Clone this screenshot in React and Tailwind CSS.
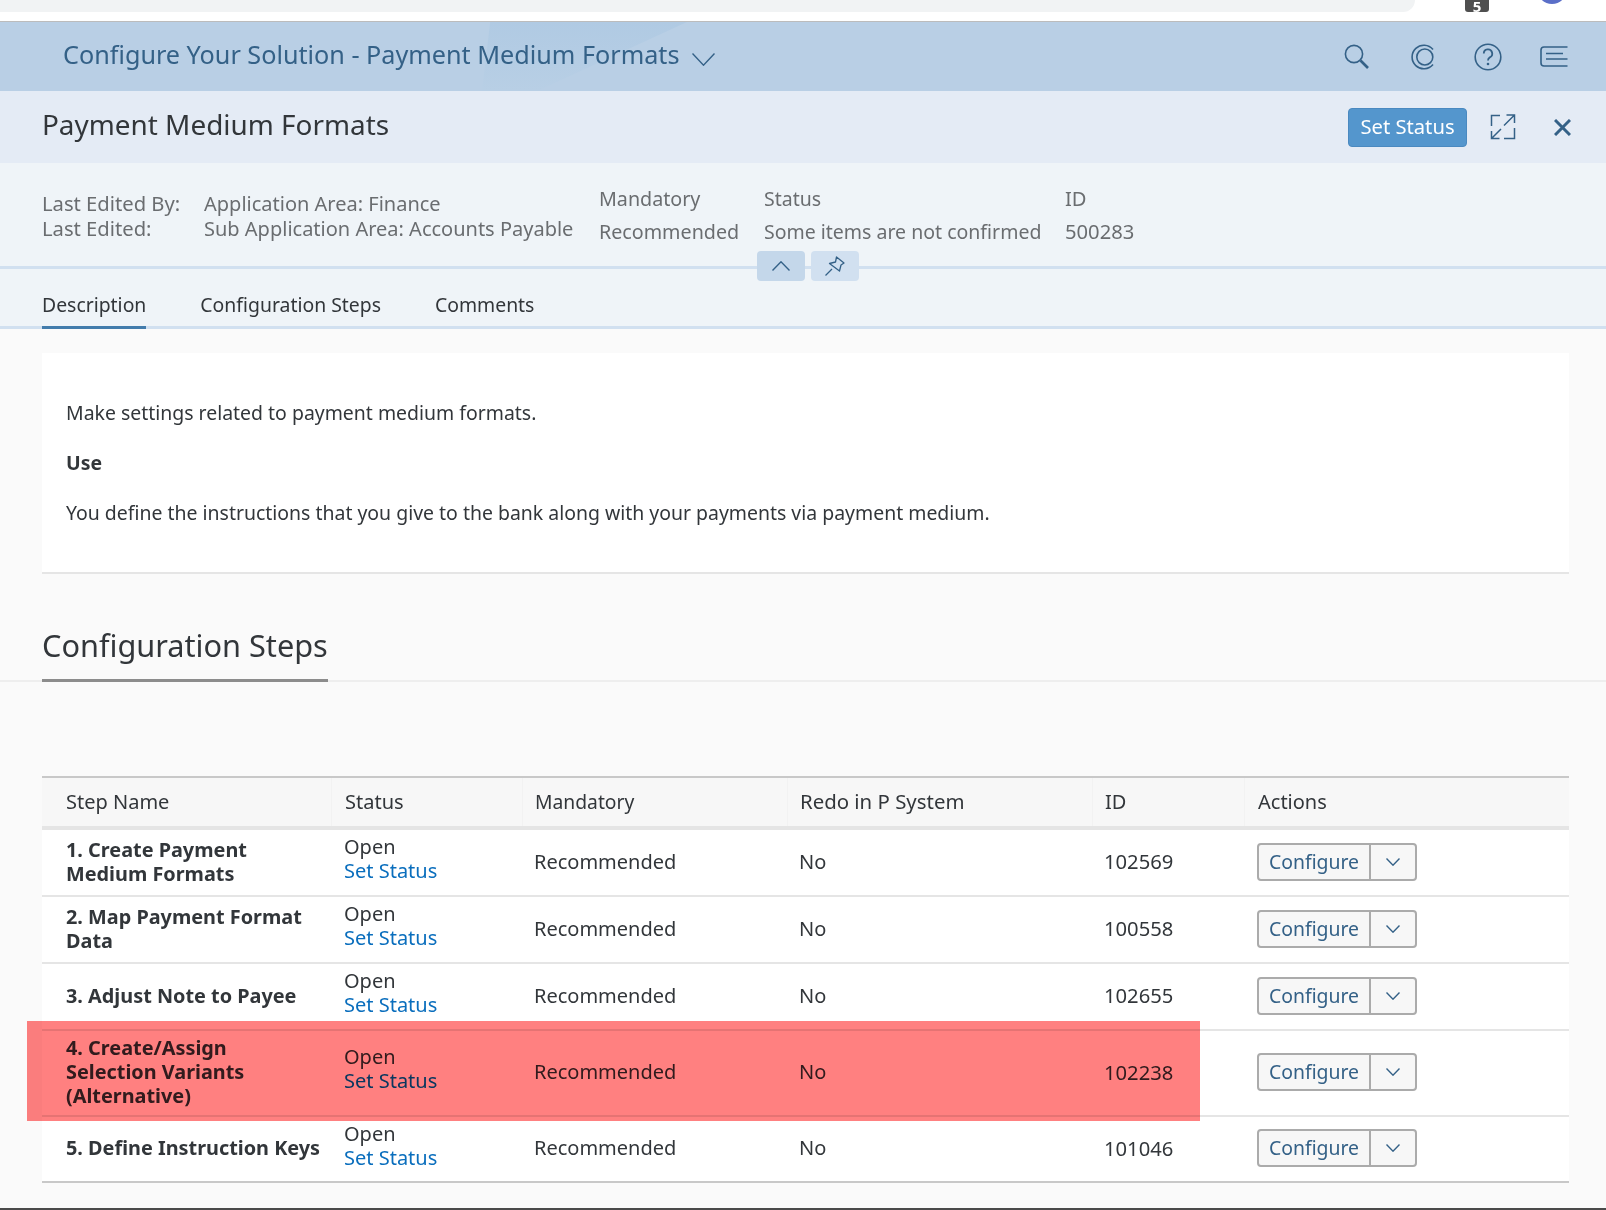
import React from 'react';

const font = { fontFamily: '"Noto Sans", sans-serif' };

function Search() {
  return (
    <svg width="26" height="26" viewBox="0 0 26 26" fill="none" stroke="#346187" strokeWidth="1.6">
      <circle cx="10" cy="10" r="8.6" />
      <path d="M16.5 16.5 L24 24" strokeWidth="2.6" />
    </svg>
  );
}
function Rings() {
  return (
    <svg width="24" height="26" viewBox="0 0 24 26" fill="none" stroke="#346187" strokeWidth="1.6">
      <path d="M22 5.5 A11.8 11.8 0 1 0 22 20.5" />
      <circle cx="13.8" cy="13" r="8" />
    </svg>
  );
}
function Help() {
  return (
    <svg width="28" height="28" viewBox="0 0 28 28" fill="none" stroke="#346187" strokeWidth="1.6">
      <circle cx="14" cy="14" r="12.8" />
      <path d="M9.8 10.6 A4.2 4.2 0 1 1 15.8 14.4 C14.4 15.2 14 16 14 17.6" strokeWidth="1.8" />
      <circle cx="14" cy="21" r="1.3" fill="#346187" stroke="none" />
    </svg>
  );
}
function Notes() {
  return (
    <svg width="28" height="21" viewBox="0 0 28 21" fill="none" stroke="#346187" strokeWidth="1.6">
      <path d="M27.5 1 H4 Q1 1 1 4 V17 Q1 20 4 20 H27.5" />
      <path d="M6 7.5 H23 M6 13 H27.5" />
    </svg>
  );
}
function Expand() {
  return (
    <svg width="26" height="26" viewBox="0 0 26 26" fill="none" stroke="#346187" strokeWidth="1.5">
      <path d="M10 1.5 H1.5 V12 M24.5 14 V24.5 H14" />
      <path d="M14 11.5 L24.5 1 M16.5 1 H24.5 V9" />
      <path d="M1.5 24.5 L11 15 M1.5 17 V24.5 H9.5" />
    </svg>
  );
}
function Close() {
  return (
    <svg width="17" height="17" viewBox="0 0 17 17" fill="none" stroke="#346187" strokeWidth="3">
      <path d="M1 1 L16 16 M16 1 L1 16" />
    </svg>
  );
}
function Chevron({ size = 14, up = false, color = '#346187' }) {
  const h = Math.round(size * 0.55);
  return (
    <svg width={size} height={h} viewBox={`0 0 ${size} ${h}`} fill="none" stroke={color} strokeWidth="1.4">
      <path d={up ? `M0.5 ${h - 0.5} L${size / 2} 0.8 L${size - 0.5} ${h - 0.5}` : `M0.5 0.5 L${size / 2} ${h - 0.8} L${size - 0.5} 0.5`} />
    </svg>
  );
}
function Pin() {
  return (
    <svg width="20" height="20" viewBox="0 0 20 20" fill="none" stroke="#346187" strokeWidth="1.3">
      <path d="M0.5 19.5 L7 13" />
      <path d="M11.5 1 L19 7 L16 9 L14.5 15 L4.5 7.5 L10.5 6 Z" strokeLinejoin="round" />
    </svg>
  );
}

function ConfigureButton() {
  return (
    <div className="flex h-[38px] w-[160px] rounded-[4px] border-2 border-[#ababab] bg-[#f7f7f7]">
      <div className="flex w-[112px] items-center justify-center border-r-2 border-[#ababab] text-[19.4px] text-[#346187]">Configure</div>
      <div className="flex flex-1 items-center justify-center"><Chevron size={14} /></div>
    </div>
  );
}

const cols = 'grid grid-cols-[289px_191px_265px_305px_152px_325px]';

function Row({ name, id, h, last }) {
  const rule = last ? 'border-[#c8c8c8]' : 'border-[#e5e5e5]';
  const statusPad = last ? 'pb-[6px]' : 'pb-[8px]';
  return (
    <div className={`${cols} ${h} border-b-2 ${rule} bg-white text-[20px] leading-[24px] text-[#32363a]`}>
      <div className="flex items-center pb-[2px] pl-6 pr-1 text-[19.85px] font-bold">
        <div>{name.map((line) => <div key={line}>{line}</div>)}</div>
      </div>
      <div className={`flex flex-col justify-center ${statusPad} pl-[13px]`}>
        <div>Open</div>
        <div className="text-[#0a6ebd]">Set Status</div>
      </div>
      <div className="flex items-center pb-[2px] pl-3">Recommended</div>
      <div className="flex items-center pb-[2px] pl-3">No</div>
      <div className="flex items-center pb-[3px] pl-3 text-[20.2px]">{id}</div>
      <div className="flex items-center pb-[2px] pl-[13px]"><ConfigureButton /></div>
    </div>
  );
}

const steps = [
  { name: ['1. Create Payment', 'Medium Formats'], id: '102569', h: 'h-[67px]' },
  { name: ['2. Map Payment Format', 'Data'], id: '100558', h: 'h-[67px]' },
  { name: ['3. Adjust Note to Payee'], id: '102655', h: 'h-[67px]' },
  { name: ['4. Create/Assign', 'Selection Variants', '(Alternative)'], id: '102238', h: 'h-[86px]' },
  { name: ['5. Define Instruction Keys'], id: '101046', h: 'h-[66px]', last: true },
];

export default function App() {
  return (
    <div style={font} className="relative h-[1210px] w-[1606px] overflow-hidden bg-[#fafafa] text-[20px] text-[#32363a]">
      {/* browser remnant */}
      <div className="relative h-[22px] border-b border-[#bcbcbc] bg-white">
        <div className="h-[12px] w-[1415px] rounded-br-[24px] bg-[#f1f3f4]" />
        <div className="absolute left-[1465px] top-0 flex h-[12px] w-[24px] items-end justify-center overflow-hidden rounded-b-[3px] bg-[#4f4f4f] text-[15px] font-bold leading-[12px] text-white">5</div>
        <div className="absolute left-[1537px] top-[-26px] h-[30px] w-[30px] rounded-full bg-[#5b6fc8]" />
      </div>

      {/* shell bar */}
      <div className="relative flex h-[69px] items-center justify-between overflow-hidden bg-[#b9cfe5] pl-[63px]">
        <div className="absolute left-[482px] top-0 h-full w-[205px] bg-gradient-to-b from-[#b0cae3] to-[#b8cfe5] [clip-path:polygon(4%_0,100%_0,27%_100%,0_100%)]" />
        <div className="relative mb-[4px] flex items-center gap-[12px] text-[25.2px] text-[#346187]">
          <span>Configure Your Solution - Payment Medium Formats</span>
          <span className="mt-[10px]"><Chevron size={23} /></span>
        </div>
        <div className="relative flex items-center">
          <div className="mr-[41px]"><Search /></div>
          <div className="mr-[39px]"><Rings /></div>
          <div className="mr-[38px]"><Help /></div>
          <div className="mr-[38px]"><Notes /></div>
        </div>
      </div>

      {/* title row */}
      <div className="flex h-[72px] items-center justify-between bg-[#e4ebf5] pl-[42px] pr-[35px]">
        <div className="mb-[4px] text-[27.9px] text-[#32363a]">Payment Medium Formats</div>
        <div className="flex items-center">
          <button className="h-[39px] w-[119px] rounded-[4px] border border-[#4a89c0] bg-[#5496cd] pb-[2px] text-[20.2px] text-white">Set Status</button>
          <div className="ml-[23px] flex"><Expand /></div>
          <div className="ml-[38px] flex"><Close /></div>
        </div>
      </div>

      {/* object header */}
      <div className="relative flex h-[106px] border-b-[3px] border-[#d1e0f0] bg-[#eff4f8] pl-[42px] text-[20px] text-[#6a6d70]">
        <div className="mt-[28px] w-[162px] text-[20.2px] leading-[25px]">
          <div>Last Edited By:</div>
          <div>Last Edited:</div>
        </div>
        <div className="mt-[28px] w-[395px] leading-[25px]">
          <div>Application Area: Finance</div>
          <div>Sub Application Area: Accounts Payable</div>
        </div>
        <div className="mt-[22px] w-[165px] text-[19.7px]">
          <div className="h-[33px] leading-[28px]">Mandatory</div>
          <div className="leading-[28px]">Recommended</div>
        </div>
        <div className="mt-[22px] w-[301px] text-[19.5px]">
          <div className="h-[33px] leading-[28px]">Status</div>
          <div className="leading-[28px]">Some items are not confirmed</div>
        </div>
        <div className="mt-[21px] text-[20.2px]">
          <div className="h-[33px] leading-[28px]">ID</div>
          <div className="leading-[28px]">500283</div>
        </div>
        <div className="absolute left-[757px] top-[88px] flex gap-[6px]">
          <div className="flex h-[30px] w-[48px] items-center justify-center rounded-[4px] bg-[#c4d7ea]"><Chevron size={18} up /></div>
          <div className="flex h-[30px] w-[48px] items-center justify-center rounded-[4px] bg-[#d1e0f0]"><Pin /></div>
        </div>
      </div>

      {/* tabs */}
      <div className="flex h-[60px] gap-[54px] border-b-[3px] border-[#d1e0f0] bg-[#eff4f8] pl-[42px] text-[19.4px]">
        <div className="relative flex h-[60px] items-center pt-[12px] text-[#32363a]">
          Description
          <div className="absolute bottom-0 left-0 right-0 h-[3px] bg-[#427cac]" />
        </div>
        <div className="flex h-[60px] items-center pt-[12px] text-[#32363a]">Configuration Steps</div>
        <div className="flex h-[60px] items-center pt-[12px] text-[#32363a]">Comments</div>
      </div>

      {/* description card */}
      <div className="ml-[42px] mr-[37px] mt-[24px] h-[221px] border-b-2 border-[#e5e5e5] bg-white px-6 pt-[45px] text-[19.45px] leading-[30px]">
        <p>Make settings related to payment medium formats.</p>
        <p className="mt-[20px] font-bold">Use</p>
        <p className="mt-[20px]">You define the instructions that you give to the bank along with your payments via payment medium.</p>
      </div>

      {/* section title */}
      <div className="relative mt-[46px] h-[62px] border-b-2 border-[#eeeeee]">
        <div className="ml-[42px] inline-block h-[62px] border-b-[3px] border-[#8c8c8c] text-[30.7px] leading-[50px]">Configuration Steps</div>
      </div>

      {/* table */}
      <div className="ml-[42px] mt-[94px] w-[1527px] border-t-2 border-[#c8c8c8]">
        <div className={`${cols} h-[52px] border-b-[4px] border-[#e5e5e5] bg-[#f7f7f7] text-[20px] leading-[28px] text-[#32363a]`}>
          <div className="flex items-center pl-6">Step Name</div>
          <div className="flex items-center border-l border-[#f2f2f2] pl-[13px]">Status</div>
          <div className="flex items-center border-l border-[#f2f2f2] pl-3 text-[19.3px]">Mandatory</div>
          <div className="flex items-center border-l border-[#f2f2f2] pb-[2px] pl-3 text-[20.4px]">Redo in P System</div>
          <div className="flex items-center border-l border-[#f2f2f2] pl-3">ID</div>
          <div className="flex items-center border-l border-[#f2f2f2] pl-[13px]">Actions</div>
        </div>
        {steps.map((s) => <Row key={s.id} name={s.name} id={s.id} h={s.h} last={s.last} />)}
      </div>

      {/* bottom edge */}
      <div className="absolute bottom-0 left-0 h-[2px] w-full bg-[#4a4a4a]" />

      {/* highlight annotation */}
      <div className="absolute left-[27px] top-[1021px] h-[100px] w-[1173px] bg-[#ff8080] mix-blend-multiply" />
    </div>
  );
}
